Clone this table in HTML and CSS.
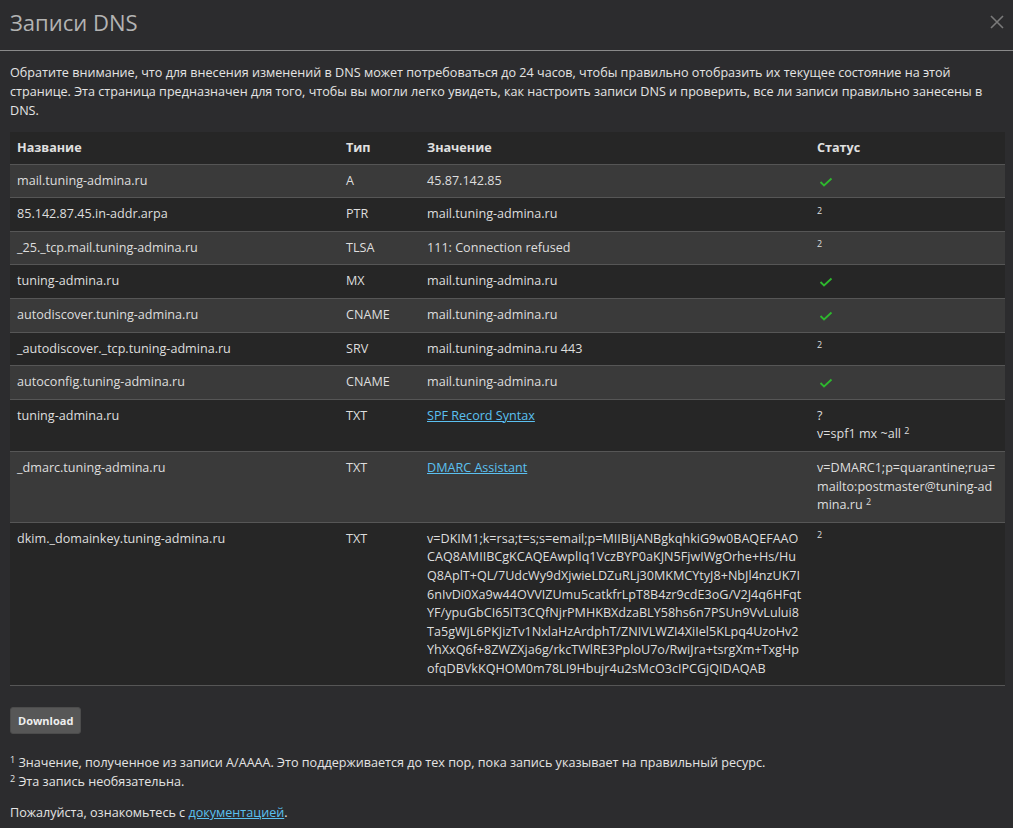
FILE: index.html
```html
<!DOCTYPE html>
<html lang="ru">
<head>
<meta charset="utf-8">
<title>Записи DNS</title>
<link rel="stylesheet" href="styles.css">
</head>
<body>
<div class="modal">
  <div class="modal-header">
    <h4 class="modal-title">Записи DNS</h4>
    <button class="close" aria-label="Close">
      <svg width="14" height="14" viewBox="0 0 14 14"><path d="M1 1L13 13M13 1L1 13" stroke="#7a7a7a" stroke-width="1.6" fill="none"/></svg>
    </button>
  </div>
  <div class="modal-body">
    <p class="intro">Обратите внимание, что для внесения изменений в DNS может потребоваться до 24 часов, чтобы правильно отобразить их текущее состояние на этой странице. Эта страница предназначен для того, чтобы вы могли легко увидеть, как настроить записи DNS и проверить, все ли записи правильно занесены в DNS.</p>
    <table class="dns">
      <colgroup>
        <col class="c-name"><col class="c-type"><col class="c-value"><col class="c-status">
      </colgroup>
      <thead>
        <tr><th>Название</th><th>Тип</th><th>Значение</th><th>Статус</th></tr>
      </thead>
      <tbody>
        <tr><td>mail.tuning-admina.ru</td><td>A</td><td>45.87.142.85</td><td><svg class="ok" width="14" height="10" viewBox="0 0 14 10"><path d="M1.5 5L5 8.5L12.5 1.5" stroke="#2eb82e" stroke-width="1.8" fill="none"/></svg></td></tr>
        <tr><td>85.142.87.45.in-addr.arpa</td><td>PTR</td><td>mail.tuning-admina.ru</td><td><sup>2</sup></td></tr>
        <tr><td>_25._tcp.mail.tuning-admina.ru</td><td>TLSA</td><td>111: Connection refused</td><td><sup>2</sup></td></tr>
        <tr><td>tuning-admina.ru</td><td>MX</td><td>mail.tuning-admina.ru</td><td><svg class="ok" width="14" height="10" viewBox="0 0 14 10"><path d="M1.5 5L5 8.5L12.5 1.5" stroke="#2eb82e" stroke-width="1.8" fill="none"/></svg></td></tr>
        <tr><td>autodiscover.tuning-admina.ru</td><td>CNAME</td><td>mail.tuning-admina.ru</td><td><svg class="ok" width="14" height="10" viewBox="0 0 14 10"><path d="M1.5 5L5 8.5L12.5 1.5" stroke="#2eb82e" stroke-width="1.8" fill="none"/></svg></td></tr>
        <tr><td>_autodiscover._tcp.tuning-admina.ru</td><td>SRV</td><td>mail.tuning-admina.ru 443</td><td><sup>2</sup></td></tr>
        <tr><td>autoconfig.tuning-admina.ru</td><td>CNAME</td><td>mail.tuning-admina.ru</td><td><svg class="ok" width="14" height="10" viewBox="0 0 14 10"><path d="M1.5 5L5 8.5L12.5 1.5" stroke="#2eb82e" stroke-width="1.8" fill="none"/></svg></td></tr>
        <tr><td>tuning-admina.ru</td><td>TXT</td><td><a href="#">SPF Record Syntax</a></td><td>?<br>v=spf1 mx ~all <sup>2</sup></td></tr>
        <tr><td>_dmarc.tuning-admina.ru</td><td>TXT</td><td><a href="#">DMARC Assistant</a></td><td class="wrap">v=DMARC1;p=quarantine;rua=<br>mailto:postmaster@tuning-ad<br>mina.ru <sup>2</sup></td></tr>
        <tr><td>dkim._domainkey.tuning-admina.ru</td><td>TXT</td><td class="wrap">v=DKIM1;k=rsa;t=s;s=email;p=MIIBIjANBgkqhkiG9w0BAQEFAAO<br>CAQ8AMIIBCgKCAQEAwplIq1VczBYP0aKJN5FjwIWgOrhe+Hs/Hu<br>Q8AplT+QL/7UdcWy9dXjwieLDZuRLj30MKMCYtyJ8+NbJl4nzUK7I<br>6nIvDi0Xa9w44OVVIZUmu5catkfrLpT8B4zr9cdE3oG/V2J4q6HFqt<br>YF/ypuGbCI65IT3CQfNjrPMHKBXdzaBLY58hs6n7PSUn9VvLului8<br>Ta5gWjL6PKJizTv1NxlaHzArdphT/ZNIVLWZI4XiIel5KLpq4UzoHv2<br>YhXxQ6f+8ZWZXja6g/rkcTWlRE3PploU7o/RwiJra+tsrgXm+TxgHp<br>ofqDBVkKQHOM0m78LI9Hbujr4u2sMcO3cIPCGjQIDAQAB</td><td><sup>2</sup></td></tr>
      </tbody>
    </table>
    <button class="btn">Download</button>
    <p class="notes"><sup>1</sup> Значение, полученное из записи A/AAAA. Это поддерживается до тех пор, пока запись указывает на правильный ресурс.<br><sup>2</sup> Эта запись необязательна.</p>
    <p class="docs">Пожалуйста, ознакомьтесь с <a href="#">документацией</a>.</p>
  </div>
</div>
</body>
</html>
```
FILE: styles.css
```css
* { box-sizing: border-box; }
html, body {
  margin: 0;
  padding: 0;
  background: #2c2c2e;
}
body {
  font-family: "Open Sans", "Noto Sans", sans-serif;
  font-size: 12.6px;
  line-height: 18.6px;
  color: #e4e4e4;
}
.modal { width: 1013px; }
.modal-header {
  display: flex;
  align-items: center;
  justify-content: space-between;
  height: 51px;
  padding: 0 9px 6px 10px;
  border-bottom: 1px solid #8a8a8a;
}
.modal-title {
  margin: 0;
  font-size: 22px;
  font-weight: 400;
  color: #b3b3b3;
  line-height: 30px;
}
.close {
  background: none;
  border: 0;
  padding: 0;
  margin: 0;
  width: 14px;
  height: 14px;
  display: flex;
}
.modal-body {
  padding: 12px 8px 0 10px;
}
.intro {
  margin: 0 0 12px;
  line-height: 19px;
}
table.dns {
  width: 995px;
  border-collapse: collapse;
  table-layout: fixed;
  margin-bottom: 21px;
}
.c-name { width: 329px; }
.c-type { width: 81px; }
.c-value { width: 390px; }
.c-status { width: 195px; }
table.dns th {
  text-align: left;
  font-weight: 700;
  background: #262626;
  padding: 7px 7px 6px;
  height: 32px;
  border-bottom: 1px solid #555;
  color: #e0e0e0;
}
table.dns td {
  vertical-align: top;
  padding: 7px;
  border-bottom: 1px solid #565656;
  color: #dedede;
}
table.dns tbody tr:nth-child(odd) td { background: #3a3a3a; }
table.dns tbody tr:nth-child(even) td { background: #262626; }
td.wrap { word-break: break-all; }
.ok {
  display: inline-block;
  vertical-align: top;
  margin: 5px 0 0 2px;
}
sup {
  font-size: 9px;
  line-height: 0;
  position: relative;
  vertical-align: baseline;
  top: -0.5em;
}
a { color: #5bc0f0; text-decoration: underline; }
.btn {
  display: block;
  background: #575757;
  color: #efefef;
  font-family: "Open Sans", "Noto Sans", sans-serif;
  font-weight: 700;
  font-size: 11px;
  line-height: 16px;
  padding: 5px 7px 4px;
  border: 1px solid #4c4c4c;
  border-radius: 3px;
  margin: 0 0 19px;
}
.notes {
  margin: 0 0 12px;
  line-height: 19px;
}
.docs {
  margin: 0;
  line-height: 19px;
}
```
